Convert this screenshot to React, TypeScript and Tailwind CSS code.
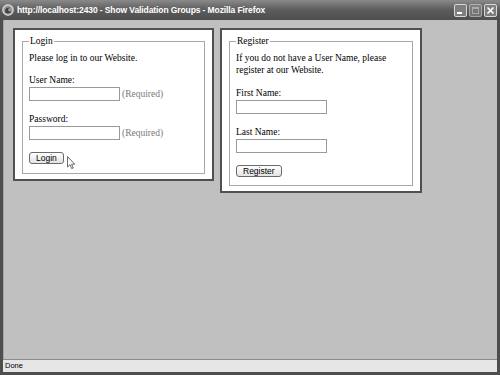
const serif = "font-['Liberation_Serif','Times_New_Roman',serif]";

const TitleIcon = () => (
  <svg width="12" height="12" viewBox="0 0 12 12">
    <circle cx="6" cy="6" r="5.2" fill="#9a9a9a" stroke="#e0e0e0" strokeWidth="1.2" />
    <path d="M3 7.5 C3 4 6 2.5 8.5 4 C7 3.8 5.5 5 6.2 6.6 C7 8.2 9 7.6 9.2 6.2 C9.4 8.6 7.2 10 5.4 9.4 C4 9 3.2 8.4 3 7.5 Z" fill="#404040" />
  </svg>
);

const Cursor = () => (
  <svg width="9" height="14" viewBox="0 0 9 14" className="absolute left-[67px] top-[156px]">
    <path
      d="M0.5 0.5 L0.5 11 L3 8.7 L4.7 12.6 L6.2 12 L4.6 8.2 L7.8 8.2 Z"
      fill="#ffffff"
      stroke="#5a5a5a"
      strokeWidth="0.9"
      strokeLinejoin="round"
    />
  </svg>
);

const WinButton = ({ kind }: { kind: "min" | "max" | "close" }) => (
  <div
    className={`w-[13px] h-[13px] rounded-[2px] border border-[#d8d8d8] flex items-center justify-center ${
      kind === "max" ? "bg-[#8a8a8a] opacity-60" : "bg-[#7e7e7e]"
    }`}
  >
    {kind === "min" && <div className="w-[5px] h-[2px] bg-white mt-[6px] mr-[3px]" />}
    {kind === "max" && <div className="w-[7px] h-[7px] border border-[#dcdcdc] border-t-2" />}
    {kind === "close" && (
      <svg width="9" height="9" viewBox="0 0 9 9">
        <path d="M1.5 1.5 L7.5 7.5 M7.5 1.5 L1.5 7.5" stroke="#fff" strokeWidth="1.6" />
      </svg>
    )}
  </div>
);

const TextBox = () => <div className="w-[91px] h-[14px] border border-[#9a9a9a] bg-white" />;

const Button = ({ label }: { label: string }) => (
  <div className="inline-flex items-center h-[12px] px-[6px] border border-[#6a6a6a] rounded-[3px] bg-gradient-to-b from-[#ffffff] to-[#e4e4e4] font-['Liberation_Sans',Arial,sans-serif] text-[8.5px] leading-none text-black">
    {label}
  </div>
);

const Panel = ({
  legend,
  width,
  children,
}: {
  legend: string;
  width: string;
  children: React.ReactNode;
}) => (
  <div className={`${width} bg-white border-2 border-[#505050] px-[7px] pt-[5px] pb-[5px]`}>
    <fieldset className="border border-[#a8a8a8] px-[6px] pb-[8px]">
      <legend className="px-[1px] leading-[12px]">{legend}</legend>
      {children}
    </fieldset>
  </div>
);

export default function App() {
  return (
    <div className={`relative w-[500px] h-[375px] bg-[#4e4e4e] flex flex-col overflow-hidden`}>
      {/* Title bar */}
      <div className="h-[20px] flex items-center pl-[2px] pr-[3px] bg-gradient-to-b from-[#8a8a8a] via-[#5c5c5c] to-[#4e4e4e]">
        <TitleIcon />
        <span className="ml-[3px] text-white font-['Liberation_Sans',Arial,sans-serif] font-bold text-[8.5px] tracking-[-0.1px]">
          http://localhost:2430 - Show Validation Groups - Mozilla Firefox
        </span>
        <div className="ml-auto flex gap-[2px]">
          <WinButton kind="min" />
          <WinButton kind="max" />
          <WinButton kind="close" />
        </div>
      </div>

      {/* Window body */}
      <div className="flex-1 flex flex-col px-[3px] pb-[3px]">
        <div className={`flex-1 bg-[#c0c0c0] border-l border-[#a4a4a4] flex items-start gap-[6px] pt-[8px] pl-[9px] ${serif} text-[9.5px] text-black`}>
          <Panel legend="Login" width="w-[201px]">
            <p className="mt-[5px] leading-[12px]">Please log in to our Website.</p>
            <div className="mt-[10px] leading-[12px]">User Name:</div>
            <div className="mt-[1px] flex items-center">
              <TextBox />
              <span className="ml-[2px] text-[#7a7a7a] leading-[12px]">(Required)</span>
            </div>
            <div className="mt-[12px] leading-[12px]">Password:</div>
            <div className="mt-[1px] flex items-center">
              <TextBox />
              <span className="ml-[2px] text-[#7a7a7a] leading-[12px]">(Required)</span>
            </div>
            <div className="mt-[12px] pb-[1px] flex">
              <Button label="Login" />
            </div>
          </Panel>

          <Panel legend="Register" width="w-[202px]">
            <p className="mt-[5px] leading-[12px]">
              If you do not have a User Name, please register at our Website.
            </p>
            <div className="mt-[11px] leading-[12px]">First Name:</div>
            <div className="mt-[1px]">
              <TextBox />
            </div>
            <div className="mt-[12px] leading-[12px]">Last Name:</div>
            <div className="mt-[1px]">
              <TextBox />
            </div>
            <div className="mt-[12px] flex">
              <Button label="Register" />
            </div>
          </Panel>
        </div>

        {/* Status bar */}
        <div className="h-[13px] bg-[#e6e6e6] border-t border-[#8c8c8c] flex items-center pl-[2px] font-['Liberation_Sans',Arial,sans-serif] text-[7.5px] text-black">
          Done
        </div>
      </div>

      <Cursor />
    </div>
  );
}
